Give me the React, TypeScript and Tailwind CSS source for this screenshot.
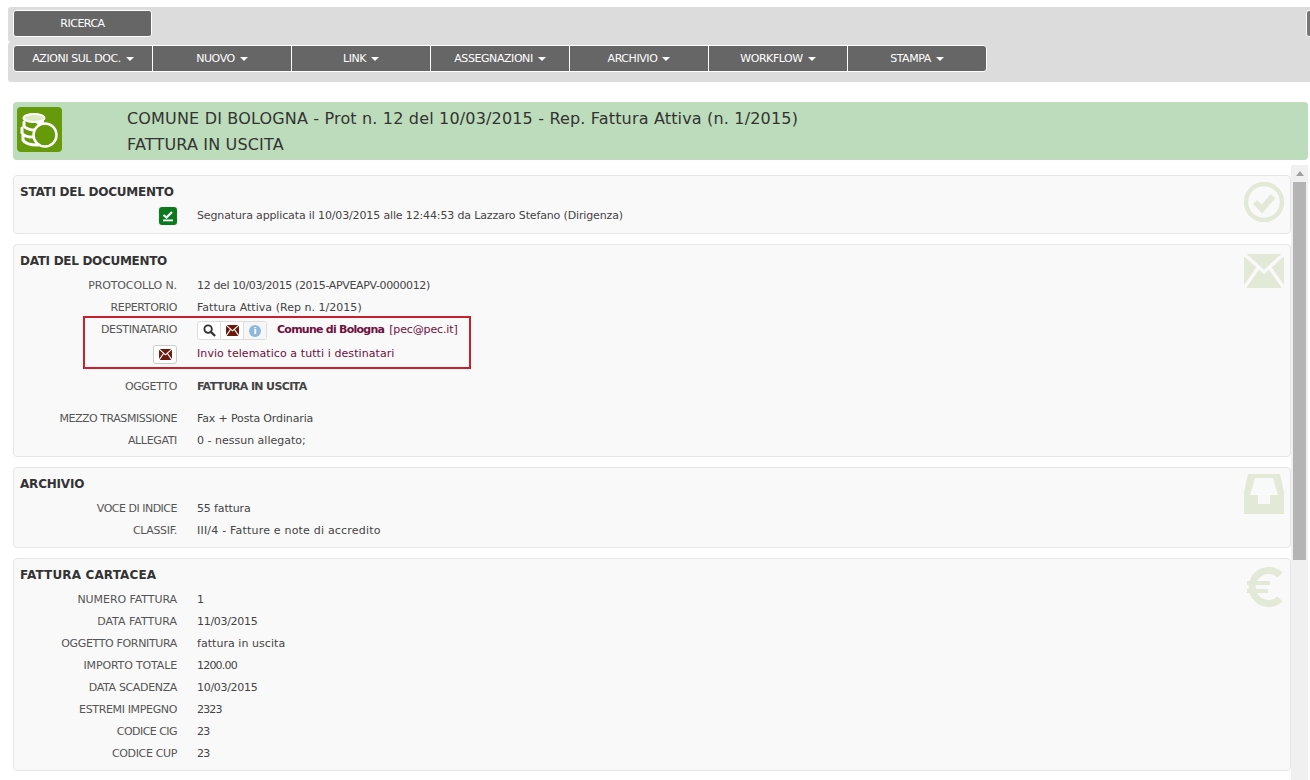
import React from "react";

const menus = ["AZIONI SUL DOC.", "NUOVO", "LINK", "ASSEGNAZIONI", "ARCHIVIO", "WORKFLOW", "STAMPA"];

function Env({ className, c1, c2 }: { className: string; c1: string; c2: string }) {
  return (
    <svg viewBox="0 0 40 34" className={className}>
      <rect width="40" height="34" fill={c1} />
      <path d="M0 0 L20 18 L40 0 M0 34 L14 14 M40 34 L26 14" stroke={c2} strokeWidth="3.5" fill="none" />
    </svg>
  );
}

function Row({ label, children, h = "h-[22px]", lt = "tracking-[-0.35px]" }: { label: React.ReactNode; children: React.ReactNode; h?: string; lt?: string }) {
  return (
    <div className={`flex items-center ${h}`}>
      <div className={`w-[157px] flex justify-end text-[#555] shrink-0 ${lt}`}>{label}</div>
      <div className="ml-5 text-[#444] flex items-center min-w-0">{children}</div>
    </div>
  );
}

function Panel({ title, icon, className, children, tc = "" }: { title: string; icon: React.ReactNode; className: string; children: React.ReactNode; tc?: string }) {
  return (
    <section className={`relative bg-[#f9f9f9] border border-[#e6e6e6] rounded-[4px] pl-[6px] ${className}`}>
      <h2 className={`font-bold text-[12px] text-[#333] h-[17px] leading-[17px] mt-[8px] mb-[1px] ${tc}`}>{title}</h2>
      <div className="absolute right-[6px] top-[6px] w-[40px] flex justify-center">{icon}</div>
      {children}
    </section>
  );
}

export default function App() {
  return (
    <div className="h-[780px] w-[1310px] overflow-hidden bg-white text-[11px] tracking-[-0.14px]" style={{ fontFamily: '"DejaVu Sans", sans-serif' }}>
      <div className="h-[7px]" />
      <div className="ml-[8px] relative overflow-hidden">
        <div className="h-[35px] bg-[#dcdcdc] rounded-l-[3px] pt-[3px] pl-[5px]">
          <div className="w-[139px] h-[27px] bg-[#666] text-white rounded-[3px] border border-white flex items-center justify-center text-[11px] tracking-[-0.5px] pt-[2px]">RICERCA</div>
        </div>
        <div className="absolute right-[-135px] top-[3px] w-[139px] h-[27px] bg-[#777] rounded-[3px] border border-white" />
        <div className="h-[40px] bg-[#dcdcdc] rounded-l-[3px] pt-[3px] pl-[5px]">
          <div className="flex w-max border border-white rounded-[4px] overflow-hidden">
            {menus.map((m, i) => (
              <div key={m} className={`h-[25px] bg-[#666] text-white flex items-center justify-center gap-[5px] text-[11px] tracking-[-0.43px] ${i ? "w-[139px] border-l border-white" : "w-[138px]"}`}>
                <span className="pt-[2px]">{m}</span>
                <span className="w-0 h-0 border-x-[4px] border-x-transparent border-t-[4px] border-t-white mt-[1px]" />
              </div>
            ))}
          </div>
        </div>
      </div>

      <div className="mt-[20px] ml-[13px] mr-[2px] h-[58px] bg-[#bddcbb] rounded-[4px] flex items-start pl-[4px] pt-[5px]">
        <div className="w-[45px] h-[45px] bg-[#669a0a] rounded-[4px] shrink-0 flex items-center justify-center">
          <svg viewBox="0 0 45 45" className="w-[45px] h-[45px]">
            <ellipse cx="17" cy="11" rx="10.5" ry="4" fill="#dfe9c4" stroke="#fff" strokeWidth="2" />
            <path d="M7 15 L7 19 C9 22 14 23 19 23 M5 21 L5 26 C7 29 11 30 15 30 M6 28 L6 33 C8 37 14 38 21 38" stroke="#fff" strokeWidth="3" fill="none" strokeLinecap="round" />
            <path d="M27 14 C24 14 22 15 20 17" stroke="#fff" strokeWidth="3" fill="none" />
            <circle cx="28" cy="28" r="11.5" fill="#669a0a" stroke="#fff" strokeWidth="2.5" />
          </svg>
        </div>
        <div className="ml-[65px] text-[#333] text-[16px] leading-[26px] mt-[-1px] tracking-[0.17px]">
          <div>COMUNE DI BOLOGNA - Prot n. 12 del 10/03/2015 - Rep. Fattura Attiva (n. 1/2015)</div>
          <div>FATTURA IN USCITA</div>
        </div>
      </div>

      <div className="mt-[5px] flex h-[620px]">
        <div className="ml-[13px] w-[1278px] pt-[10px] flex flex-col gap-[10px]">
          <Panel title="STATI DEL DOCUMENTO" tc="tracking-[-0.25px]" className="h-[59px]" icon={
            <svg viewBox="0 0 40 40" className="w-[40px] h-[40px]">
              <circle cx="20" cy="20" r="18" fill="none" stroke="#e3e9d7" strokeWidth="4.5" />
              <path d="M11 20 L18 27 L29 14" fill="none" stroke="#e3e9d7" strokeWidth="6" />
            </svg>
          }>
            <div className="pt-[2px]">
              <Row label={
                <span className="w-[18px] h-[18px] bg-[#0c7a1c] rounded-[3px] flex items-center justify-center">
                  <svg viewBox="0 0 18 18" className="w-[18px] h-[18px]"><path d="M4.5 8 L7.5 10.5 L13 5" fill="none" stroke="#fff" strokeWidth="2.2" /><rect x="4" y="12.5" width="10" height="1.8" fill="#fff" /></svg>
                </span>
              } h="h-[24px]">Segnatura applicata il 10/03/2015 alle 12:44:53 da Lazzaro Stefano (Dirigenza)</Row>
            </div>
          </Panel>

          <Panel title="DATI DEL DOCUMENTO" tc="tracking-[-0.3px]" className="h-[213px]" icon={<Env className="w-[40px] h-[34px] mt-[3px]" c1="#e3e9d7" c2="#f9f9f9" />}>
            <div className="mt-[5px]">
              <Row label="PROTOCOLLO N." lt="tracking-[-0.12px]"><span className="tracking-[-0.37px]">12 del 10/03/2015 (2015-APVEAPV-0000012)</span></Row>
              <Row label="REPERTORIO"><span className="tracking-[0.03px]">Fattura Attiva (Rep n. 1/2015)</span></Row>
              <Row label="DESTINATARIO" h="h-[22px]">
                <span className="flex h-[19px] border border-[#ddd] rounded-[3px] bg-white mt-[1px]">
                  <span className="w-[23px] flex items-center justify-center border-r border-[#ddd]">
                    <svg viewBox="0 0 14 14" className="w-[13px] h-[13px]"><circle cx="5.5" cy="5.5" r="4" fill="none" stroke="#333" strokeWidth="2" /><path d="M8.5 8.5 L13 13" stroke="#333" strokeWidth="2.4" /></svg>
                  </span>
                  <span className="w-[23px] flex items-center justify-center border-r border-[#ddd]">
                    <Env className="w-[13px] h-[11px]" c1="#6b1a0c" c2="#fff" />
                  </span>
                  <span className="w-[22px] flex items-center justify-center bg-[#f6f6f6]">
                    <span className="w-[12px] h-[12px] rounded-full bg-[#8db9da] text-white text-[9px] font-bold leading-[12px] text-center">i</span>
                  </span>
                </span>
                <span className="ml-[10px] text-[#6e1040] font-bold tracking-[-0.75px]">Comune di Bologna</span>
                <span className="ml-[5px] text-[#6e1040]">[pec@pec.it]</span>
              </Row>
              <Row label={
                <span className="w-[24px] h-[19px] border border-[#ccc] rounded-[3px] bg-white flex items-center justify-center">
                  <Env className="w-[13px] h-[11px]" c1="#6b1a0c" c2="#fff" />
                </span>
              } h="h-[26px]"><span className="text-[#6e1040] tracking-[0.08px]">Invio telematico a tutti i destinatari</span></Row>
              <div className="absolute left-[69px] top-[71px] w-[388px] h-[53px] border-2 border-[#c9202e]" />
              <div className="h-[7px]" />
              <Row label="OGGETTO" h="h-[26px]"><span className="font-bold tracking-[-0.63px]">FATTURA IN USCITA</span></Row>
              <div className="h-[8px]" />
              <Row label="MEZZO TRASMISSIONE" lt="tracking-[-0.46px]">Fax + Posta Ordinaria</Row>
              <Row label="ALLEGATI"><span className="tracking-[0px]">0 - nessun allegato;</span></Row>
            </div>
          </Panel>

          <Panel title="ARCHIVIO" tc="tracking-[-0.2px]" className="h-[81px]" icon={
            <svg viewBox="0 0 40 40" className="w-[40px] h-[40px]"><path fillRule="evenodd" fill="#e3e9d7" d="M4 0 H36 L40 18 V40 H0 V18 Z M11 4 L6 21 H14 V30 H26 V21 H34 L29 4 Z" /></svg>
          }>
            <div className="mt-[5px]">
              <Row label="VOCE DI INDICE" lt="tracking-[-0.5px]">55 fattura</Row>
              <Row label="CLASSIF."><span className="tracking-[0.2px]">III/4 - Fatture e note di accredito</span></Row>
            </div>
          </Panel>

          <Panel title="FATTURA CARTACEA" tc="tracking-[0.15px]" className="h-[213px]" icon={
            <svg viewBox="0 0 36 40" className="w-[36px] h-[40px] mt-[2px]">
              <path d="M34 8 A16.5 16.5 0 1 0 34 32" fill="none" stroke="#e3e9d7" strokeWidth="7" />
              <path d="M1 16 H24 M1 24 H22" stroke="#e3e9d7" strokeWidth="4" />
            </svg>
          }>
            <div className="mt-[5px]">
              <Row label="NUMERO FATTURA" lt="tracking-[-0.07px]">1</Row>
              <Row label="DATA FATTURA" lt="tracking-[0px]"><span className="tracking-[-0.3px]">11/03/2015</span></Row>
              <Row label="OGGETTO FORNITURA"><span className="tracking-[0.05px]">fattura in uscita</span></Row>
              <Row label="IMPORTO TOTALE" lt="tracking-[-0.15px]"><span className="tracking-[-0.8px]">1200.00</span></Row>
              <Row label="DATA SCADENZA"><span className="tracking-[-0.3px]">10/03/2015</span></Row>
              <Row label="ESTREMI IMPEGNO"><span className="tracking-[-0.85px]">2323</span></Row>
              <Row label="CODICE CIG" lt="tracking-[-0.55px]"><span className="tracking-[-0.85px]">23</span></Row>
              <Row label="CODICE CUP"><span className="tracking-[-0.85px]">23</span></Row>
            </div>
          </Panel>
        </div>

        <div className="w-[17px] bg-[#f0f0f0] flex flex-col items-center">
          <div className="h-[17px] flex items-center justify-center">
            <span className="w-0 h-0 border-x-[4px] border-x-transparent border-b-[5px] border-b-[#a0a0a0]" />
          </div>
          <div className="w-[13px] h-[378px] bg-[#b4b4b4]" />
        </div>
      </div>
    </div>
  );
}
